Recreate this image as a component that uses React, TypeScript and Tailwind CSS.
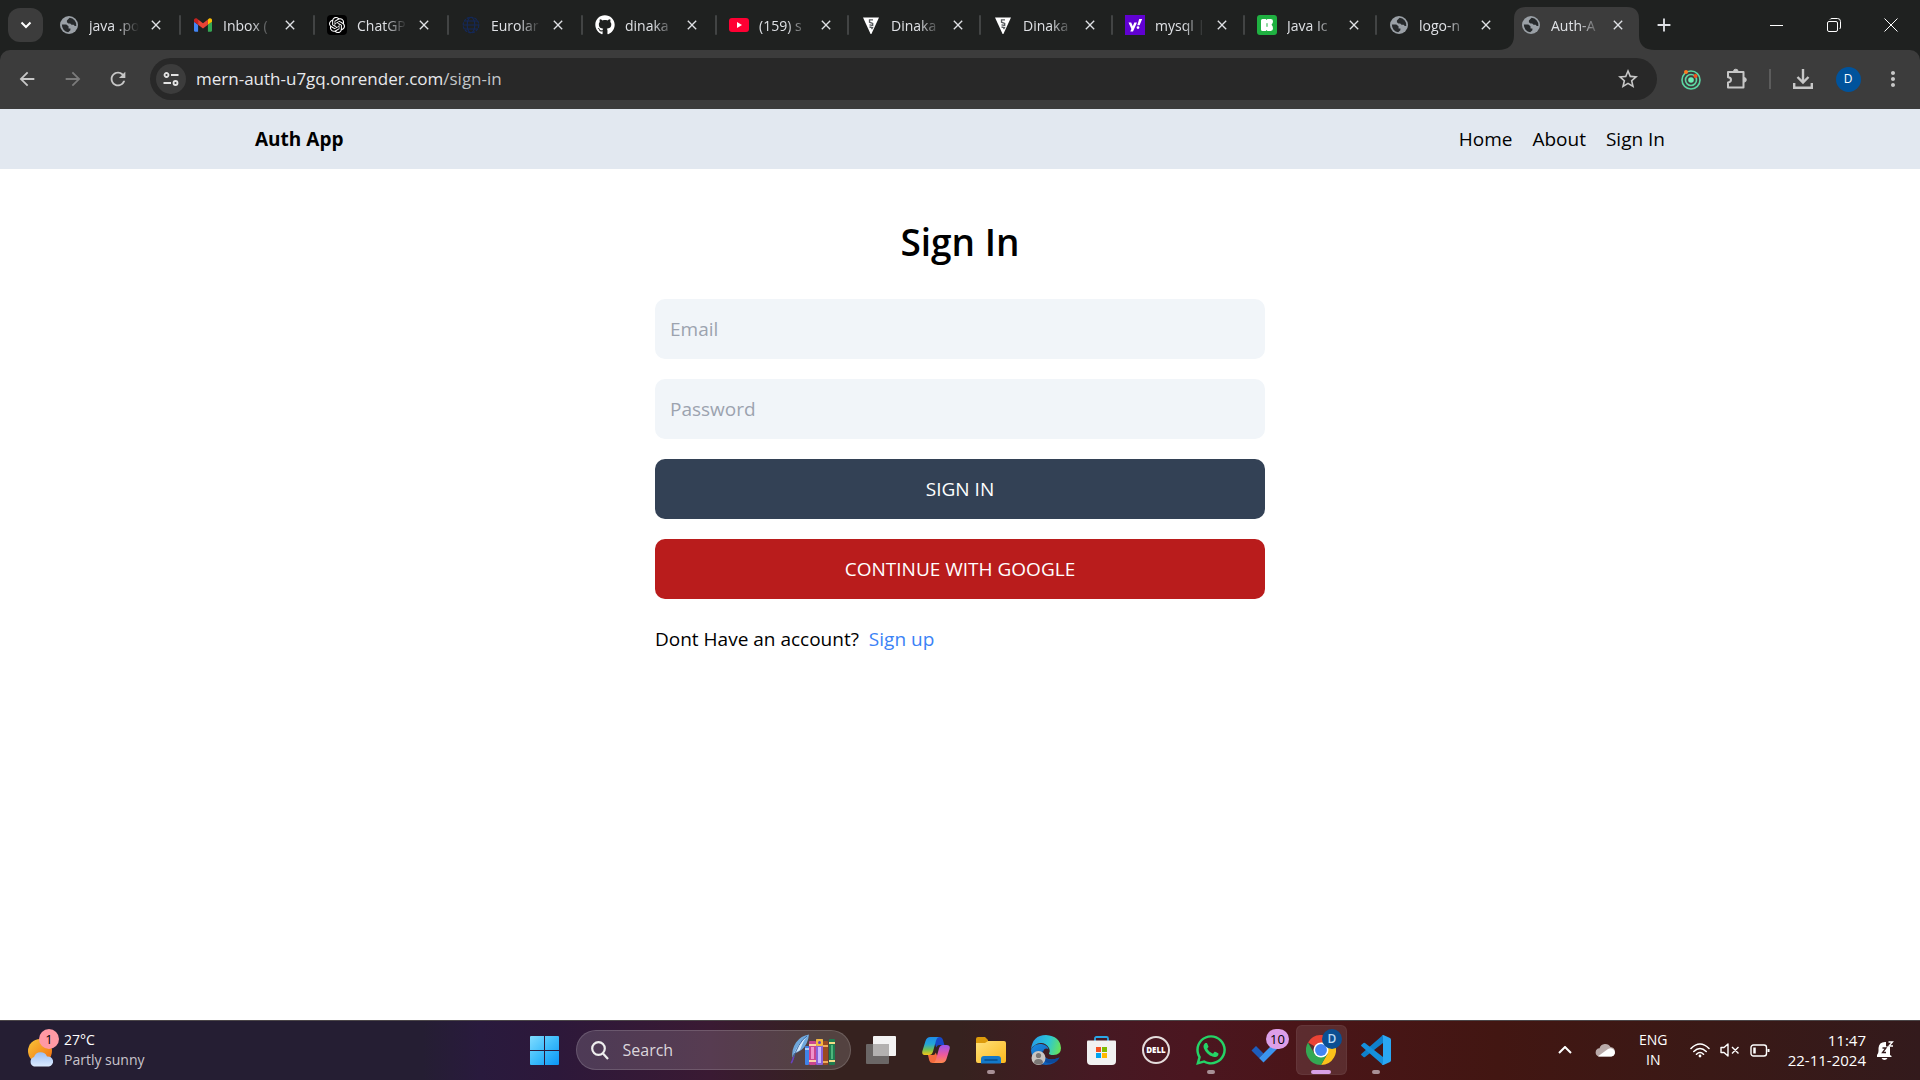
import type { ReactNode } from "react";
import { FaGithub, FaWhatsapp } from "react-icons/fa";
import { SiOpenai } from "react-icons/si";
import { MdArrowBack, MdArrowForward, MdRefresh, MdMoreVert, MdStarBorder, MdClose, MdAdd } from "react-icons/md";

function Globe() {
  return (
    <svg viewBox="0 0 18 18" className="size-[18px]" aria-hidden="true">
      <circle cx="9" cy="9" r="9" fill="#9aa0a6" />
      <path
        fill="#26292b"
        d="M9.6 1.8 6.9 4.6v1.6l1.6 1.2h1.7l1.3 1.4h2.2l1 1.2h1.6A7.2 7.2 0 0 0 9.6 1.8ZM1.9 8.6h4.4l2.2 1.6.1 2.2 1.8.2v1.6l-2.2 2A7.3 7.3 0 0 1 1.9 8.6Z"
      />
    </svg>
  );
}

function Gmail() {
  return (
    <svg viewBox="52 42 88 66" className="h-[14px] w-[18px]" aria-hidden="true">
      <path fill="#4285f4" d="M58 108h14V74L52 59v43c0 3.32 2.69 6 6 6" />
      <path fill="#34a853" d="M120 108h14c3.32 0 6-2.69 6-6V59l-20 15" />
      <path fill="#fbbc04" d="M120 48v26l20-15v-8c0-7.42-8.47-11.65-14.4-7.2" />
      <path fill="#ea4335" d="M72 74V48l24 18 24-18v26L96 92" />
      <path fill="#c5221f" d="M52 51v8l20 15V48l-5.6-4.2c-5.94-4.45-14.4-.22-14.4 7.2" />
    </svg>
  );
}

function Chat() {
  return (
    <span className="flex size-5 items-center justify-center rounded-[4px] bg-black text-white">
      <SiOpenai className="size-4" />
    </span>
  );
}

function Network() {
  return (
    <svg viewBox="0 0 18 18" className="size-[18px]" fill="none" stroke="#14295a" strokeWidth="1.1" aria-hidden="true">
      <circle cx="9" cy="9" r="7.8" strokeDasharray="3 1" />
      <ellipse cx="9" cy="9" rx="3.8" ry="7.8" />
      <path d="M1 9h16M2.4 5h13.2M2.4 13h13.2" />
    </svg>
  );
}

function YouTube() {
  return (
    <svg viewBox="0 0 20 14" className="h-[14px] w-5" aria-hidden="true">
      <rect width="20" height="14" rx="3" fill="#ff0033" />
      <path d="M8 4v6l5-3z" fill="#fff" />
    </svg>
  );
}

function Shield() {
  return (
    <svg viewBox="0 0 16 17" className="h-[17px] w-4" aria-hidden="true">
      <path d="M0 .5h16L8.4 17h-.8z" fill="#fff" />
      <path d="M10 2.8H6.5v2.4l3.2 1.2v2L6.5 7.8M6.500 10l3 .6-1 1.6" fill="none" stroke="#55595c" strokeWidth="1.300" />
    </svg>
  );
}

function Yahoo() {
  return (
    <span className="flex size-5 items-center justify-center bg-[#6001d2] text-white">
      <svg viewBox="0 0 20 20" className="size-5" aria-hidden="true">
        <path d="M3.500 7.500h2.700l1.600 3.700 1.500-3.700H12l-4 9H5.300l1.100-2.400zM14.200 4h3l-2.600 6.300h-2.300zM13 11.200a1.400 1.400 0 1 1 0 2.800 1.400 1.400 0 0 1 0-2.800Z" fill="currentColor" />
      </svg>
    </span>
  );
}

function IconsTile() {
  return (
    <svg viewBox="0 0 20 20" className="size-5" aria-hidden="true">
      <rect width="20" height="20" rx="3" fill="#1fb141" />
      <path d="M5.500 4h3.300l.8 1 .8-1h3.300Q16 4 16 6.200 16 8.500 14.500 9.800 16 11 16 13.600 16 16 13.700 16h-3.300l-.8-1-.8 1H5.500Q4 16 4 14.500v-9Q4 4 5.500 4Z" fill="#fff" />
      <path d="M10 8.200v3.600" stroke="#1fb141" />
    </svg>
  );
}

const tabs: { title: string; icon: ReactNode }[] = [
  { title: "java .po", icon: <Globe /> },
  { title: "Inbox (", icon: <Gmail /> },
  { title: "ChatGP", icon: <Chat /> },
  { title: "Eurolar", icon: <Network /> },
  { title: "dinaka", icon: <FaGithub className="size-5 text-white" /> },
  { title: "(159) s", icon: <YouTube /> },
  { title: "Dinaka", icon: <Shield /> },
  { title: "Dinaka", icon: <Shield /> },
  { title: "mysql |", icon: <Yahoo /> },
  { title: "Java Ic", icon: <IconsTile /> },
  { title: "logo-n", icon: <Globe /> },
  { title: "Auth-A", icon: <Globe /> },
];

function Tab({ title, icon, active, wide, last }: { title: string; icon: ReactNode; active: boolean; wide: boolean; last: boolean }) {
  return (
    <div className={`relative flex h-full shrink-0 items-center ${wide ? "w-[134px]" : "w-[132px]"}`}>
      {active && (
        <svg viewBox="0 0 157 43" className="absolute bottom-0 -left-[11px] h-[43px] w-[157px]" aria-hidden="true">
          <path d="M0 43Q16 43 16 28V12Q16 0 28 0H129Q141 0 141 12V28Q141 43 157 43Z" fill="#3c3c3c" />
        </svg>
      )}
      <button className="relative flex h-[34px] items-center pl-3 text-left text-[14px] text-[#dfe1e5]">
        <span className="flex w-5 justify-center">{icon}</span>
        <span className="ml-[10px] w-[54px] whitespace-nowrap [mask-image:linear-gradient(to_right,black_28px,transparent_50px)]">
          {title}
        </span>
      </button>
      <button aria-label={`Close ${title}`} className="relative ml-[3px] flex size-5 items-center justify-center text-[#dfe1e5]">
        <MdClose className="size-4" />
      </button>
      {!active && !last && <span className="ml-auto h-5 w-[2px] rounded bg-[#424444]" />}
    </div>
  );
}

function TabStrip() {
  return (
    <div className="flex h-[50px] items-center bg-[#1f2120]">
      <button aria-label="Search tabs" className="mr-1 ml-2 flex h-[34px] w-[35px] shrink-0 items-center justify-center rounded-xl bg-[#3c3c3c] text-white">
        <svg viewBox="0 0 12 8" className="h-2 w-3" fill="none" stroke="currentColor" strokeWidth="2" aria-hidden="true">
          <path d="m1.500 1.500 4.500 4.500 4.500-4.500" />
        </svg>
      </button>
      {tabs.map((t, i) => (
        <Tab key={i} title={t.title} icon={t.icon} active={i === 11} wide={i < 5} last={i === 10} />
      ))}
      <button aria-label="New tab" className="ml-3 flex size-[22px] items-center justify-center text-[#dfe1e5]">
        <MdAdd className="size-[22px]" />
      </button>
      <div className="ml-auto flex h-full text-white">
        <button aria-label="Minimize" className="flex w-[57px] items-center justify-center">
          <span className="h-px w-[13px] bg-white" />
        </button>
        <button aria-label="Restore" className="flex w-[57px] items-center justify-center">
          <svg viewBox="0 0 14 14" className="size-[14px]" fill="none" stroke="currentColor" aria-hidden="true">
            <rect x=".5" y="3.500" width="10" height="10" rx="1.500" />
            <path d="M3 1.500Q3.500.5 5 .5h5.500q3 0 3 3V9q0 1.500-1 2" />
          </svg>
        </button>
        <button aria-label="Close window" className="flex w-[58px] items-center justify-center">
          <svg viewBox="0 0 14 14" className="size-[14px]" fill="none" stroke="currentColor" aria-hidden="true">
            <path d="m.5.5 13 13m0-13-13 13" />
          </svg>
        </button>
      </div>
    </div>
  );
}

function Toolbar() {
  return (
    <div className="bg-[#1f2120]">
      <div className="flex h-[59px] items-center rounded-t-[10px] bg-[#3c3c3c] pr-1 pb-px pl-1 text-[#c7c7c7]">
        <button aria-label="Back" className="flex w-[46px] justify-center"><MdArrowBack className="size-[22px]" /></button>
        <button aria-label="Forward" className="flex w-[45px] justify-center text-[#7b7b7b]"><MdArrowForward className="size-[22px]" /></button>
        <button aria-label="Reload" className="flex w-[46px] justify-center"><MdRefresh className="size-[22px]" /></button>
        <div className="ml-[9px] flex h-[42px] flex-1 items-center rounded-full bg-[#282828] pr-[17px] pl-[6px]">
          <button aria-label="View site information" className="flex size-[30px] items-center justify-center rounded-full bg-[#3c3c3c] text-[#e3e3e3]">
            <svg viewBox="0 0 16 14" className="h-[14px] w-4" fill="none" stroke="currentColor" strokeWidth="1.800" aria-hidden="true">
              <circle cx="3.500" cy="3" r="2" />
              <path d="M8 3h7.500M.5 11H8" />
              <circle cx="12.500" cy="11" r="2" />
            </svg>
          </button>
          <a href="#" aria-label="Address" className="ml-[10px] flex-1 text-[17px] text-[#e8eaed]">
            mern-auth-u7gq.onrender.com<span className="text-[#c3c6c9]">/sign-in</span>
          </a>
          <button aria-label="Bookmark this tab"><MdStarBorder className="size-6" /></button>
        </div>
        <button aria-label="Orbit extension" className="ml-[11px] flex w-[46px] justify-center">
          <svg viewBox="0 0 22 22" className="size-[22px]" fill="none" stroke="#5cd6a2" strokeWidth="1.600" aria-hidden="true">
            <circle cx="11" cy="12" r="9" />
            <circle cx="11" cy="12" r="5.500" />
            <circle cx="11" cy="12" r="2.800" fill="#6cf0b4" stroke="none" />
            <circle cx="6" cy="4" r="2" fill="#ff7a1f" stroke="none" />
            <circle cx="15.500" cy="8" r="2" fill="#f4511e" stroke="none" />
          </svg>
        </button>
        <button aria-label="Extensions" className="flex w-[46px] justify-center">
          <svg viewBox="0 0 22 22" className="size-[22px]" fill="none" stroke="currentColor" strokeWidth="2" strokeLinejoin="round" aria-hidden="true">
            <path d="M2 4h15.500v15.500H2v-5q3-.3 3-2.700T2 9.200Z" />
            <path d="M7.500 3.500a2.300 2.300 0 0 1 4.600 0M18 9.500a2.300 2.300 0 0 1 0 4.600" fill="currentColor" strokeWidth="1" />
          </svg>
        </button>
        <span className="mx-[9px] h-5 w-[2px] bg-[#5c5c5c]" />
        <button aria-label="Downloads" className="flex w-[46px] justify-center">
          <svg viewBox="0 0 20 20" className="size-5" fill="none" stroke="currentColor" strokeWidth="2.400" aria-hidden="true">
            <path d="M10 0v13M4.500 8l5.500 5.500L15.500 8M1.200 14v4.800h17.600V14" />
          </svg>
        </button>
        <button aria-label="Profile" className="flex w-[44px] justify-center">
          <span className="flex size-[25px] items-center justify-center rounded-full bg-[#00539c] text-[12px] text-white">D</span>
        </button>
        <button aria-label="Menu" className="flex w-[46px] justify-center"><MdMoreVert className="size-6" /></button>
      </div>
    </div>
  );
}

function SiteHeader() {
  return (
    <header className="bg-[#e2e8f0]">
      <div className="mx-auto flex h-[60px] max-w-[1440px] items-center justify-between px-[15px]">
        <a href="#" className="text-[19px] font-bold">Auth App</a>
        <nav className="flex gap-5 text-[19px]">
          <a href="#">Home</a>
          <a href="#">About</a>
          <a href="#">Sign In</a>
        </nav>
      </div>
    </header>
  );
}

function SignInForm() {
  return (
    <main className="mx-auto w-full max-w-[640px] flex-1 p-[15px] text-[19px] leading-[30px]">
      <h1 className="my-[35px] text-center text-[37px] leading-[45px] font-semibold">Sign In</h1>
      <form className="flex flex-col gap-5" onSubmit={(e) => e.preventDefault()}>
        <input type="email" aria-label="Email" placeholder="Email" className="h-[60px] rounded-[10px] bg-[#f1f5f9] px-[15px] placeholder:text-[#9ca3af]" />
        <input type="password" aria-label="Password" placeholder="Password" className="h-[60px] rounded-[10px] bg-[#f1f5f9] px-[15px] placeholder:text-[#9ca3af]" />
        <button className="h-[60px] rounded-[10px] bg-[#334155] text-white uppercase">Sign In</button>
        <button type="button" className="h-[60px] rounded-[10px] bg-[#b91c1c] text-white uppercase">Continue with Google</button>
      </form>
      <div className="mt-[25px] flex gap-[10px]">
        <p>Dont Have an account?</p>
        <a href="#" className="text-[#3b82f6]">Sign up</a>
      </div>
    </main>
  );
}

function TaskItem({ label, running, active, children }: { label: string; running?: boolean; active?: boolean; children: ReactNode }) {
  return (
    <button aria-label={label} className="relative flex h-[59px] w-[55px] items-center justify-center">
      {active && <span className="absolute inset-x-[2px] top-1 bottom-[5px] rounded-md border border-white/5 bg-white/10" />}
      <span className="relative">{children}</span>
      {running && <span className="absolute bottom-[6px] h-1 w-2 rounded-full bg-[#a89096]" />}
      {active && <span className="absolute bottom-[6px] h-1 w-5 rounded-full bg-[#d9a0e6]" />}
    </button>
  );
}

function WindowsLogo() {
  return (
    <svg viewBox="0 0 29 29" className="size-[29px]" aria-hidden="true">
      <defs>
        <linearGradient id="win" x1="0" y1="0" x2="29" y2="29" gradientUnits="userSpaceOnUse">
          <stop offset="0" stopColor="#80dcff" />
          <stop offset=".5" stopColor="#3dbcfb" />
          <stop offset="1" stopColor="#0b95f5" />
        </linearGradient>
      </defs>
      <path fill="url(#win)" d="M1 0h13v14H0V1q0-1 1-1ZM15 0h13q1 0 1 1v13H15ZM0 15h14v14H1q-1 0-1-1ZM15 15h14v13q0 1-1 1H15Z" />
    </svg>
  );
}

function Books() {
  return (
    <svg viewBox="0 0 46 32" className="h-8 w-[46px] shrink-0" fill="none" stroke="none" aria-hidden="true">
      <path d="M2.500 24Q1 16 6 8.500 11 1.500 19 .5 18 10 12 15.500 7 19 4 19.500Z" fill="#6fa8dc" />
      <path d="M4 19.500Q8 9 18 1.500 14 5 10 16Z" fill="#d3e8fa" />
      <path d="M17 2Q8 8 2 28" stroke="#3d6ba8" strokeWidth="1" />
      <path d="m3.500 22-3 7 1.500.5L4.500 23Z" fill="#6a3fc0" />
      <rect x="15" y="12" width="4" height="19" rx="1" fill="#3f83e8" />
      <rect x="15" y="14" width="4" height="2" fill="#a9d0ff" />
      <rect x="19" y="7" width="7" height="24" rx="1" fill="#c9468f" />
      <rect x="19" y="10" width="7" height="2" fill="#f9d2a8" />
      <rect x="19" y="26" width="7" height="2" fill="#f9d2a8" />
      <rect x="21" y="13" width="3" height="12" fill="#ef92cb" />
      <rect x="26" y="5" width="7" height="26" rx="1" fill="#8b62d8" />
      <rect x="26" y="5" width="7" height="7" rx="1" fill="#f3b73d" />
      <circle cx="29.500" cy="8.500" r="1.500" fill="#6a3fc0" />
      <rect x="28" y="13" width="3" height="16" fill="#cbb8ff" />
      <rect x="33" y="7" width="5" height="24" rx="1" fill="#9a4a22" />
      <rect x="33" y="11" width="5" height="2" fill="#efac5c" />
      <rect x="33" y="27" width="5" height="2" fill="#efac5c" />
      <rect x="39" y="5" width="6" height="26" rx="1" fill="#1f7d50" />
      <rect x="39" y="8" width="6" height="2" fill="#f4dc87" />
      <rect x="39" y="26" width="6" height="2" fill="#f4dc87" />
      <rect x="41" y="11" width="2" height="14" fill="#4fb57c" />
    </svg>
  );
}

function TaskView() {
  return (
    <svg viewBox="0 0 30 28" className="h-7 w-[30px]" aria-hidden="true">
      <rect x="7" width="23" height="20" rx="1" fill="#f3f3f3" />
      <rect y="8" width="23" height="20" rx="1" fill="#6b6766" />
      <path d="M7 8h16v12H7z" fill="#b3b1b0" />
    </svg>
  );
}

function Copilot() {
  return (
    <svg viewBox="0 0 28 26" className="h-[26px] w-7" aria-hidden="true">
      <defs>
        <linearGradient id="cpa" x1="0" y1="0" x2="0" y2="1">
          <stop offset="0" stopColor="#1e8de8" /><stop offset=".4" stopColor="#24a6d6" /><stop offset=".7" stopColor="#72c054" /><stop offset="1" stopColor="#f5c518" />
        </linearGradient>
        <linearGradient id="cpb" x1="0" y1="0" x2="0" y2="1">
          <stop offset="0" stopColor="#9a55ee" /><stop offset=".55" stopColor="#ee5a9c" /><stop offset="1" stopColor="#ff8a4a" />
        </linearGradient>
      </defs>
      <path d="M15 0h2.500Q20 0 21 3l1.400 5H17Q15 8 14.200 10.500L12.500 5Z" fill="#1748c8" />
      <path d="M6 18h5q2 0 2.800-2.500L16 21l-1 3.500q-.5 1.500-2.500 1.500h-2Q8 26 7.300 23.500Z" fill="#f46b3e" />
      <path d="M8.500 0H17q-2 .4-2.800 3L11 14.500Q10 18 7 18H3.500Q-.6 18 .4 14L3.500 4Q4.700 0 8.500 0Z" fill="url(#cpa)" />
      <path d="M19.500 26H11q2-.4 2.800-3L17 11.500Q18 8 21 8h3.500q4.100 0 3.100 4l-3.100 10q-1.200 4-5 4Z" fill="url(#cpb)" />
    </svg>
  );
}

function Explorer() {
  return (
    <svg viewBox="0 0 30 27" className="h-[27px] w-[30px]" aria-hidden="true">
      <defs>
        <linearGradient id="fold" x1="0" y1="0" x2="1" y2="1"><stop offset="0" stopColor="#ffe07a" /><stop offset="1" stopColor="#fbb91c" /></linearGradient>
      </defs>
      <path d="M0 2Q0 0 2 0h7l3 3v6H0Z" fill="#dd9b0b" />
      <path d="M0 6h9l3-2h16q2 0 2 2v18q0 2-2 2H2q-2 0-2-2Z" fill="url(#fold)" />
      <path d="M5 26.500V22q0-3 3-3h14q3 0 3 3v4.500Z" fill="#1479c9" />
      <path d="M9 23h12" stroke="#064d8b" strokeWidth="1.500" strokeLinecap="round" />
    </svg>
  );
}

function Edge() {
  return (
    <svg viewBox="0 0 30 30" className="size-[30px]" aria-hidden="true">
      <defs>
        <linearGradient id="edt" x1="0" y1=".4" x2="1" y2=".6"><stop offset="0" stopColor="#269de8" /><stop offset=".55" stopColor="#2cc6d6" /><stop offset="1" stopColor="#68e35a" /></linearGradient>
        <linearGradient id="edb" x1="0" y1="0" x2="1" y2="1"><stop offset="0" stopColor="#1b8de3" /><stop offset="1" stopColor="#0b4da8" /></linearGradient>
      </defs>
      <path d="M0 15Q3 8 10.500 9q6.500 1 7 5.500-2-2-4.500 0-3 5 2 8.500 5 3 13.500-.5Q24 30 15 30 1 29 0 15Z" fill="url(#edb)" />
      <path d="M12.500 15q-3 5 2.500 8.500 5 2.500 13.500-1-1 2.500-4 4.500-10 3-14.500-3.500-2-5 2.500-8.500Z" fill="#0c4a9c" />
      <path d="M0 14.500Q1.500 0 15 0q14 1 15 13 0 7-7.500 7-5 0-4.500-2 1.500-1.500 0-5Q15 8 10 8 3 8.500 0 14.500Z" fill="url(#edt)" />
      <circle cx="7.500" cy="23" r="7" fill="#c9c5c2" />
      <circle cx="7.500" cy="20.500" r="2.600" fill="#7b7775" />
      <path d="M3 28q0-4 4.500-4t4.500 4q-4 3-9 0Z" fill="#7b7775" />
    </svg>
  );
}

function Store() {
  return (
    <svg viewBox="0 0 29 29" className="size-[29px]" aria-hidden="true">
      <path d="M8 6V2.500Q8 1 9.500 1h10Q21 1 21 2.500V6" fill="none" stroke="#2aa7e8" strokeWidth="1.800" />
      <path d="M1 4.500h27q1 0 1 1V25q0 4-4 4H4q-4 0-4-4V5.500q0-1 1-1Z" fill="#f1f1f1" />
      <path d="M9 11h5v5H9z" fill="#f25022" /><path d="M15 11h5v5h-5z" fill="#7fba00" />
      <path d="M9 17h5v5H9z" fill="#00a4ef" /><path d="M15 17h5v5h-5z" fill="#ffb900" />
    </svg>
  );
}

function Dell() {
  return (
    <span className="flex size-7 items-center justify-center rounded-full border-2 border-[#e4dcdc] text-[8px] leading-none font-extrabold text-white">
      DELL
    </span>
  );
}

function Todo() {
  return (
    <span className="relative flex h-[30px] w-[30px] items-center">
      <svg viewBox="0 0 29 22" className="mt-1 h-[22px] w-[29px]" aria-hidden="true">
        <path d="M.5 9.500 5 5l7.500 7.500L8 17Z" fill="#1c5dbd" />
        <path d="M8 17 23.500 1.500 28 6 12.500 21.500Z" fill="#3b94ef" />
      </svg>
      <span className="absolute -top-[6px] left-[15px] flex h-5 w-[23px] items-center justify-center rounded-full bg-[#dc9fe8] text-[13px] text-black">10</span>
    </span>
  );
}

function Chrome() {
  return (
    <span className="relative block">
      <svg viewBox="0 0 48 48" className="size-[30px]" aria-hidden="true">
        <path d="M24 24 3.200 12A24 24 0 0 1 44.800 12Z" fill="#ea4335" />
        <path d="M24 12h20.800A24 24 0 0 1 24 48L34.400 30Z" fill="#fbc11a" />
        <path d="M3.200 12A24 24 0 0 0 24 48l10.400-18H13.600Z" fill="#34a853" />
        <circle cx="24" cy="24" r="12" fill="#fff" />
        <circle cx="24" cy="24" r="9.500" fill="#4285f4" />
      </svg>
      <span className="absolute -top-[6px] left-4 flex size-5 items-center justify-center rounded-full bg-[#0b4f92] text-[12px] font-semibold text-[#b9d9f5]">D</span>
    </span>
  );
}

function VsCode() {
  return (
    <svg viewBox="0 0 30 30" className="size-[30px]" aria-hidden="true">
      <path d="M22 0v8L4 22q-.8.600-1.500 0L.5 20.300q-.9-.8 0-1.600Z" fill="#0f80cc" />
      <path d="M22 30v-8L4 8q-.8-.6-1.500 0L.5 9.700q-.9.8 0 1.600Z" fill="#1590dc" />
      <path d="M20 29.600q2 .9 3.500 0l5.500-2.700q1-.5 1-1.700V4.800Q30 3.600 29 3.100L23.500.4q-1.700-.8-3 .5Q22 0 22 2v26q0 2-2 1.600Z" fill="#2aa7f3" />
    </svg>
  );
}

function Taskbar() {
  return (
    <footer className="flex h-[60px] items-center border-t border-[#4b4648] bg-[linear-gradient(to_right,#251e33_0%,#251e33_22%,#291a3d_25%,#2d183a_29%,#3a1a33_37%,#36221f_43%,#36221f_50%,#461923_57%,#4b1620_62%,#4a1518_68%,#421612_78%,#3a1916_89%,#331a1c_100%)] pb-px text-[14px] leading-5 text-white">
      <div className="flex flex-1 items-center px-[26px]">
        <button className="flex items-center gap-[10px] text-left">
          <span className="relative block">
            <svg viewBox="0 0 28 38" className="h-[38px] w-7" aria-hidden="true">
              <defs>
                <linearGradient id="sun" x1="0" y1="0" x2="1" y2="1"><stop offset="0" stopColor="#f9c63a" /><stop offset="1" stopColor="#f06a0e" /></linearGradient>
                <linearGradient id="cloud" x1="0" y1="0" x2="0" y2="1"><stop offset="0" stopColor="#9dbff5" /><stop offset="1" stopColor="#dcebff" /></linearGradient>
              </defs>
              <circle cx="14" cy="20" r="12" fill="url(#sun)" />
              <path d="M8 35.500a5 5 0 0 1 0-9.500 7 7 0 0 1 13-.5 5 5 0 0 1 2 10Z" fill="url(#cloud)" />
            </svg>
            <span className="absolute -top-[2px] left-[13px] flex size-5 items-center justify-center rounded-full bg-[#ff99a4] text-[13px] text-black">1</span>
          </span>
          <span>
            <span className="block">27°C</span>
            <span className="block text-[#c9c4cc]">Partly sunny</span>
          </span>
        </button>
      </div>
      <div className="flex items-center">
        <TaskItem label="Start"><WindowsLogo /></TaskItem>
        <button className="mr-[3px] ml-1 flex h-10 w-[275px] items-center rounded-full border border-white/15 bg-white/15 px-[14px] text-[16px] text-[#dcd6dc]">
          <svg viewBox="0 0 18 19" className="h-[19px] w-[18px]" fill="none" stroke="#eee" strokeWidth="2.200" aria-hidden="true">
            <circle cx="7.500" cy="7.500" r="6.300" />
            <path d="m12 12.500 5 5.500" />
          </svg>
          <span className="ml-[14px] flex-1 text-left">Search</span>
          <Books />
        </button>
        <TaskItem label="Task view"><TaskView /></TaskItem>
        <TaskItem label="Copilot"><Copilot /></TaskItem>
        <TaskItem label="File Explorer" running><Explorer /></TaskItem>
        <TaskItem label="Edge"><Edge /></TaskItem>
        <TaskItem label="Store"><Store /></TaskItem>
        <TaskItem label="Dell"><Dell /></TaskItem>
        <TaskItem label="WhatsApp" running><FaWhatsapp className="size-[34px] text-[#25d366]" /></TaskItem>
        <TaskItem label="To Do"><Todo /></TaskItem>
        <TaskItem label="Chrome" active><Chrome /></TaskItem>
        <TaskItem label="Visual Studio Code" running><VsCode /></TaskItem>
      </div>
      <div className="flex flex-1 items-center justify-end px-[26px]">
        <button aria-label="Hidden icons">
          <svg viewBox="0 0 14 8" className="h-2 w-[14px]" fill="none" stroke="currentColor" strokeWidth="2" aria-hidden="true"><path d="m1 7 6-6 6 6" /></svg>
        </button>
        <button aria-label="OneDrive" className="ml-[23px]">
          <svg viewBox="0 0 20 14" className="h-[14px] w-5" aria-hidden="true">
            <path d="M4 13.500a4.200 4.200 0 0 1 .5-8.300A6 6 0 0 1 15.500 4a4.800 4.800 0 0 1 .5 9.500Z" fill="#b9aaa9" />
            <path d="M3 13.300 13 6q3-1.500 5.500.5a4 4 0 0 1-2 7H4Z" fill="#fff" />
          </svg>
        </button>
        <button className="ml-[23px] w-[31px] text-center">ENG<br />IN</button>
        <button aria-label="Network, volume, battery" className="ml-[21px] flex items-center gap-[10px]">
          <svg viewBox="0 0 20 15" className="h-[15px] w-5" fill="none" stroke="currentColor" strokeWidth="1.600" strokeLinecap="round" aria-hidden="true">
            <path d="M1 5.500Q10-3.500 19 5.500M3.800 8.500q6.200-6 12.400 0M6.500 11.200q3.500-3.400 7 0" />
            <circle cx="10" cy="13" r="1.400" fill="currentColor" stroke="none" />
          </svg>
          <svg viewBox="0 0 20 14" className="h-[14px] w-5" fill="none" stroke="currentColor" strokeWidth="1.400" aria-hidden="true">
            <path d="M1 4.500h3L8 1v12L4 9.500H1ZM12 4l6.500 6.500M18.500 4 12 10.500" strokeLinejoin="round" />
          </svg>
          <svg viewBox="0 0 20 13" className="h-[13px] w-5" fill="none" stroke="currentColor" strokeWidth="1.400" aria-hidden="true">
            <rect x="1" y="1" width="15.500" height="11" rx="2.500" />
            <path d="M18.500 5v3" strokeWidth="2" /><path d="M4.500 3.500v6" strokeWidth="2.500" />
          </svg>
        </button>
        <button className="ml-[18px] text-right text-[15px]">11:47<br />22-11-2024</button>
        <button aria-label="Notifications" className="ml-[10px]">
          <svg viewBox="0 0 18 19" className="h-[19px] w-[18px]" aria-hidden="true">
            <path d="M1 14q1.500-1.500 1.500-4V7Q3 1 9 1h1v4.500h4V14l1.500 1v1H1ZM5.500 17h6q-1 2-3 2t-3-2Z" fill="#fff" />
            <path d="M12.500 1h4L13 5h4" fill="none" stroke="#fff" strokeWidth="1.300" />
            <path d="M6.500 7H10l-3.500 4.500H10" fill="none" stroke="#331a1c" strokeWidth="1.300" />
          </svg>
        </button>
      </div>
    </footer>
  );
}

export default function App() {
  return (
    <div className="flex min-h-screen flex-col bg-white font-['Open_Sans',sans-serif] text-black">
      <TabStrip />
      <Toolbar />
      <SiteHeader />
      <SignInForm />
      <Taskbar />
    </div>
  );
}
